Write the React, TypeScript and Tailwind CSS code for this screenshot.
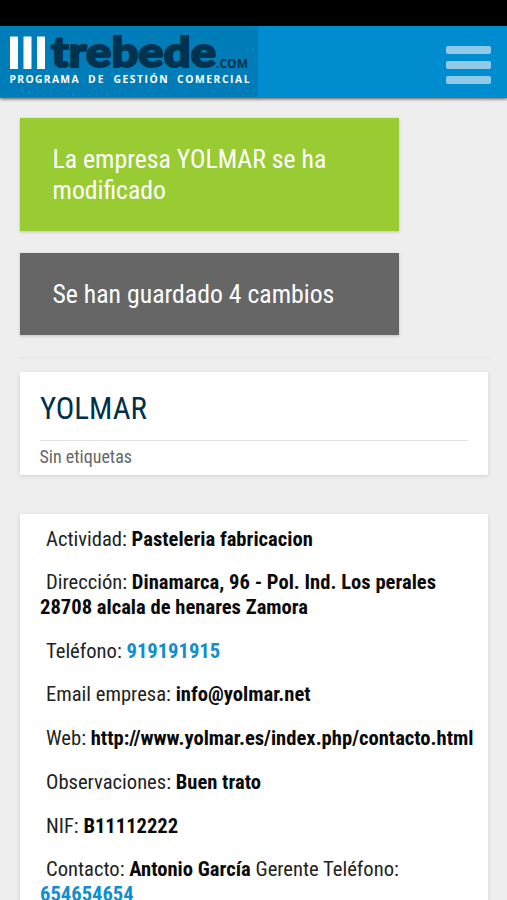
import type { ReactNode } from 'react';

const tagline = [
  { word: 'PROGRAMA', x: 9.5, width: 69 },
  { word: 'DE', x: 88, width: 15.5 },
  { word: 'GESTIÓN', x: 113.5, width: 54 },
  { word: 'COMERCIAL', x: 177, width: 72.5 },
];

function Logo() {
  return (
    <svg width="258" height="71" viewBox="0 0 258 71" className="block bg-[#007db8] font-stretch-normal" aria-label="trebede.com">
      <g fill="#fff">
        <rect x="10" y="10.5" width="8" height="32.5" rx="0.5" />
        <rect x="23.5" y="10.5" width="8" height="32.5" rx="0.5" />
        <rect x="37" y="10.5" width="8" height="32.5" rx="0.5" />
      </g>
      <text x="51" y="41.3" textLength="165" lengthAdjust="spacingAndGlyphs" fontFamily="Lato" fontWeight="900" fontSize="42.5" fill="#00334f" stroke="#00334f" strokeWidth="2" strokeLinejoin="round">trebede</text>
      <text x="216" y="42" textLength="32" lengthAdjust="spacingAndGlyphs" fontFamily="Open Sans" fontWeight="700" fontSize="13" fill="#00334f">.COM</text>
      {tagline.map(({ word, x, width }) => (
        <text key={word} x={x} y="57" textLength={width} fontFamily="Open Sans" fontWeight="700" fontSize="10.3" fill="#fff">{word}</text>
      ))}
    </svg>
  );
}

function Row({ label, children }: { label: string; children: ReactNode }) {
  return (
    <p className="mb-[19.4px] whitespace-nowrap">
      <span className="ml-[6px]">{label}: </span>
      {children}
    </p>
  );
}

export default function App() {
  return (
    <div className="h-[900px] w-[507px] overflow-hidden bg-[#eee] font-['Roboto_Condensed','Roboto',sans-serif] font-stretch-condensed">
      <div className="h-[26px] bg-black" />
      <header className="flex h-[72px] items-start justify-between bg-[#008ccf] pr-4 shadow-[0_1px_3px_rgba(0,0,0,0.65)]">
        <Logo />
        <div className="mt-[20px] flex w-[45px] flex-col gap-[7px]">
          <div className="h-[8px] rounded-[2px] bg-[#8fcbe8]" />
          <div className="h-[8px] rounded-[2px] bg-[#8fcbe8]" />
          <div className="h-[8px] rounded-[2px] bg-[#8fcbe8]" />
        </div>
      </header>
      <main className="px-5 pt-5">
        <div className="h-[113px] w-[379px] bg-[#9c3] px-[32.5px] pt-[26px] text-[25.75px] leading-[31px] text-white shadow-[0_1px_3px_rgba(0,0,0,0.2)]">
          La empresa YOLMAR se ha<br />modificado
        </div>
        <div className="mt-[22px] h-[82px] w-[379px] bg-[#666] px-[32.5px] pt-[26px] text-[25.75px] leading-[31px] text-white shadow-[0_1px_3px_rgba(0,0,0,0.2)]">
          Se han guardado 4 cambios
        </div>
        <hr className="-mr-1 mt-[22px] border-[#e6e6e6]" />
        <section className="mt-[14px] h-[103px] w-[468px] bg-white px-5 pt-[18px] shadow-[0_1px_4px_rgba(0,0,0,0.12)]">
          <h1 className="h-[50px] text-[30.9px] leading-[38px] text-[#00304a]">YOLMAR</h1>
          <div className="border-t border-[#e4e4e4] pt-1 text-[18px] leading-[24px] text-[#666]"><span className="-ml-[0.5px]">Sin etiquetas</span></div>
        </section>
        <section className="mt-[39px] h-[450px] w-[468px] bg-white px-5 pt-[12.5px] text-[20.6px] leading-[24.4px] text-[#222] shadow-[0_1px_4px_rgba(0,0,0,0.12)] [&_b]:font-bold [&_b]:text-[#0a0a0a]">
          <Row label="Actividad"><b>Pasteleria fabricacion</b></Row>
          <Row label="Dirección"><b>Dinamarca, 96 - Pol. Ind. Los perales<br />28708 alcala de henares Zamora</b></Row>
          <Row label="Teléfono"><a className="font-bold text-[#108fd0]">919191915</a></Row>
          <Row label="Email empresa"><b>info@yolmar.net</b></Row>
          <Row label="Web"><b>http://www.yolmar.es/index.php/contacto.html</b></Row>
          <Row label="Observaciones"><b>Buen trato</b></Row>
          <Row label="NIF"><b>B11112222</b></Row>
          <Row label="Contacto"><b>Antonio García</b> Gerente Teléfono:<br /><a className="font-bold text-[#108fd0]">654654654</a></Row>
        </section>
      </main>
    </div>
  );
}
